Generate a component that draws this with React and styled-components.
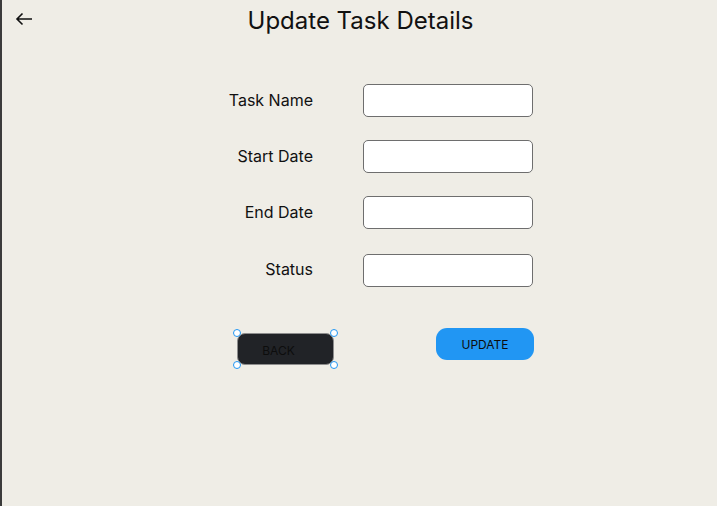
import React from "react";
import styled, { createGlobalStyle } from "styled-components";

const GlobalStyle = createGlobalStyle`
  html, body {
    margin: 0;
    padding: 0;
    height: 100%;
  }
  body {
    font-family: Inter, "Noto Sans", sans-serif;
    background: #efede6;
    color: #111;
  }
  #root {
    min-height: 100%;
  }
`;

const Page = styled.div`
  box-sizing: border-box;
  height: 506px;
  border-left: 2px solid #3b3b3b;
  background: #efede6;
`;

const Header = styled.header`
  height: 40px;
  display: grid;
  grid-template-columns: 1fr auto 1fr;
  align-items: center;
  padding-left: 2px;
`;

const BackArrow = styled.button`
  justify-self: start;
  margin-left: 10px;
  margin-top: -2px;
  border: 0;
  padding: 0;
  background: none;
  width: 20px;
  height: 18px;
  display: flex;
  align-items: center;
  justify-content: center;
  cursor: pointer;
`;

const Title = styled.h1`
  margin: 0;
  font-size: 24px;
  font-weight: 400;
  color: #111;
`;

const Form = styled.form`
  margin-top: 44px;
  padding-right: 3px;
  display: grid;
  grid-template-columns: 130px 170px;
  column-gap: 50px;
  row-gap: 23px;
  justify-content: center;
  align-items: center;
`;

const Label = styled.label`
  text-align: right;
  font-size: 16px;
  color: #111;
  margin-top: -1px;
`;

const Input = styled.input`
  box-sizing: border-box;
  width: 170px;
  height: 33px;
  border: 1px solid #6e6e6e;
  border-radius: 5px;
  background: #fff;
  margin-top: ${(p) => (p.$shift ? "2px" : "0")};
`;

const Actions = styled.div`
  grid-column: 1 / span 2;
  margin-top: 18px;
  margin-right: -1px;
  padding-left: 54px;
  display: flex;
  justify-content: space-between;
  align-items: flex-start;
`;

const Selected = styled.div`
  position: relative;
  margin-top: 5px;
`;

const Handle = styled.span`
  position: absolute;
  width: 6px;
  height: 6px;
  border-radius: 50%;
  background: #fff;
  border: 1px solid #2196f3;
  left: ${(p) => (p.$right ? "auto" : "-4px")};
  right: ${(p) => (p.$right ? "-4px" : "auto")};
  top: ${(p) => (p.$bottom ? "auto" : "-4px")};
  bottom: ${(p) => (p.$bottom ? "-4px" : "auto")};
`;

const Button = styled.button`
  box-sizing: border-box;
  width: ${(p) => (p.$dark ? "97px" : "98px")};
  height: 32px;
  border-radius: ${(p) => (p.$dark ? "8px" : "11px")};
  border: ${(p) => (p.$dark ? "1px solid #8d8d8d" : "0")};
  background: ${(p) => (p.$dark ? "#212327" : "#2196f3")};
  color: #0d0d0d;
  font-family: Inter, "Noto Sans", sans-serif;
  font-size: 12px;
  padding: ${(p) => (p.$dark ? "2px 14px 0 0" : "0")};
  cursor: pointer;
`;

const fields = ["Task Name", "Start Date", "End Date", "Status"];

export default function App() {
  return (
    <>
      <GlobalStyle />
      <Page>
        <Header>
          <BackArrow aria-label="Back">
            <svg width="18" height="14" viewBox="0 0 18 14">
              <path
                d="M17 7H2M7.5 1.5L2 7l5.5 5.5"
                fill="none"
                stroke="#111"
                strokeWidth="1.6"
              />
            </svg>
          </BackArrow>
          <Title>Update Task Details</Title>
        </Header>
        <Form>
          {fields.map((f, i) => (
            <React.Fragment key={f}>
              <Label>{f}</Label>
              <Input $shift={i === 3} />
            </React.Fragment>
          ))}
          <Actions>
            <Selected>
              <Button type="button" $dark>
                BACK
              </Button>
              <Handle />
              <Handle $right />
              <Handle $bottom />
              <Handle $right $bottom />
            </Selected>
            <Button type="button">UPDATE</Button>
          </Actions>
        </Form>
      </Page>
    </>
  );
}
